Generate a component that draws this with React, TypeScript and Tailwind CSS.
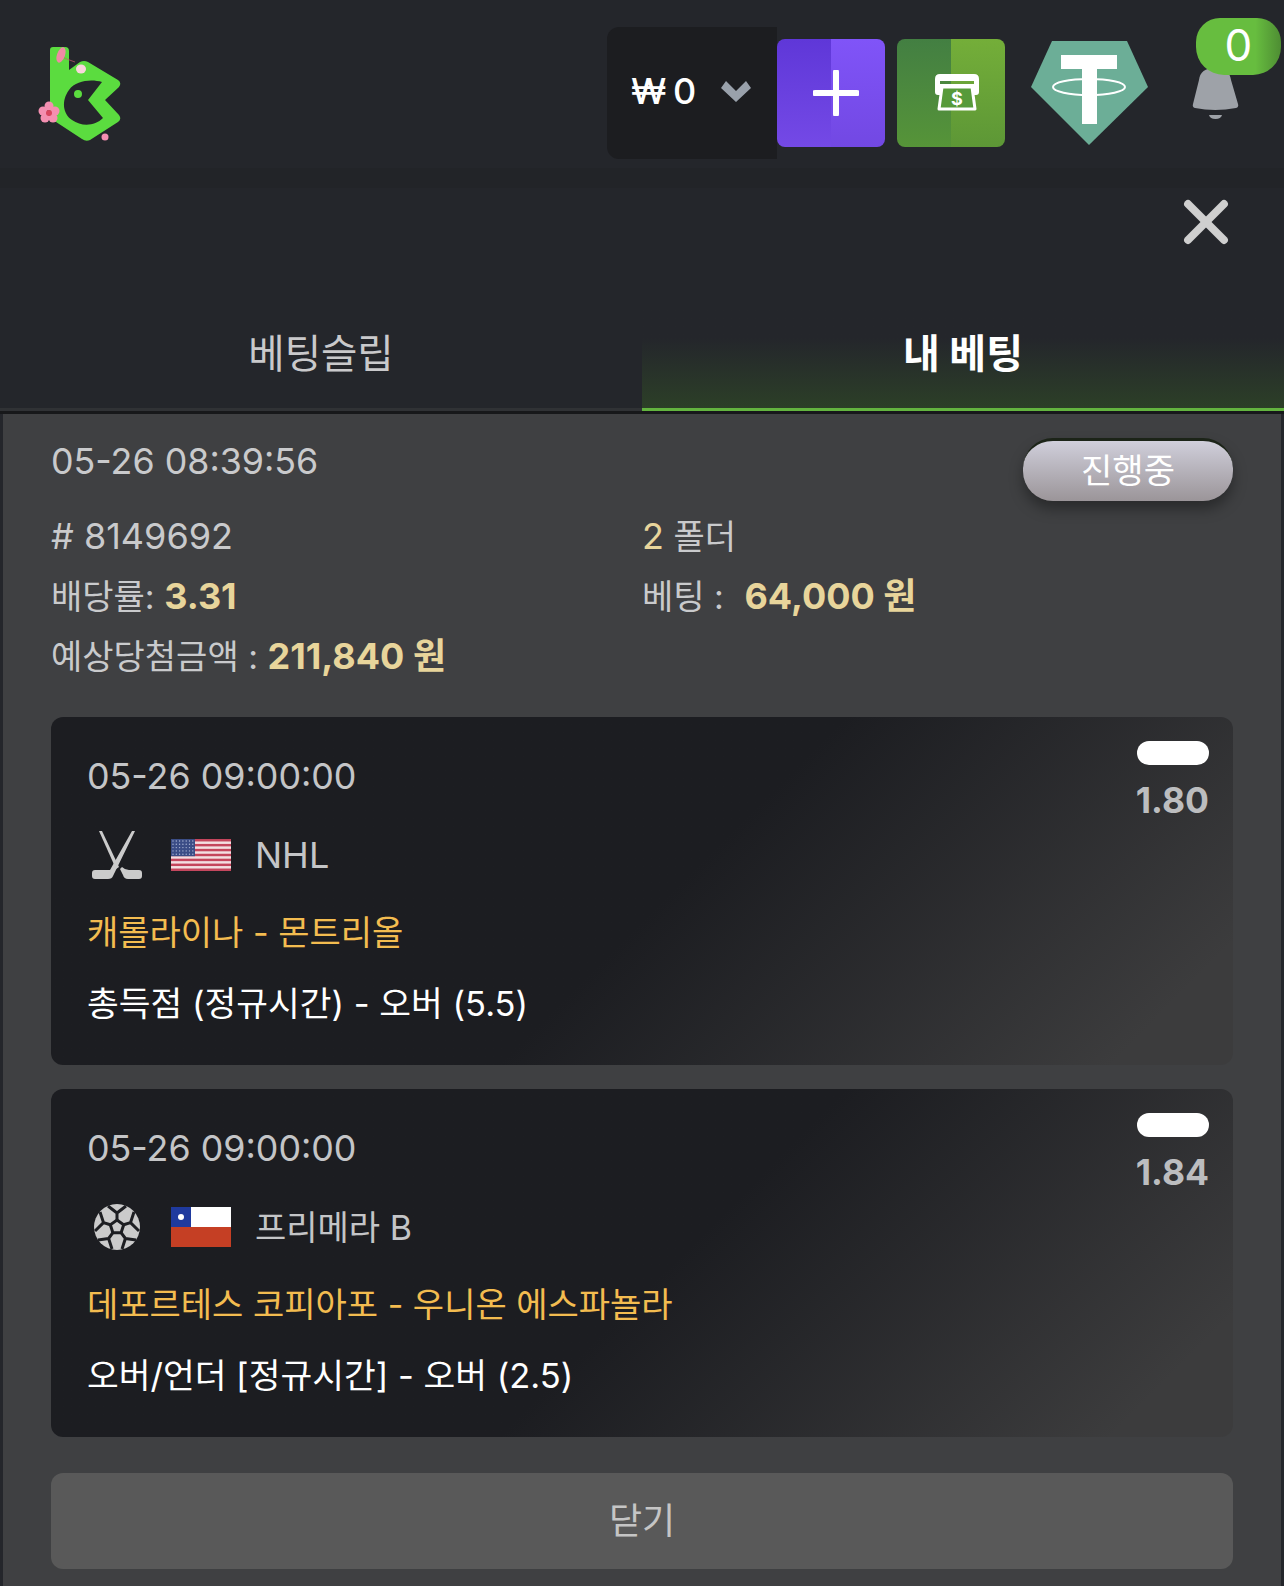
import { X } from "lucide-react";

function Logo() {
  return (
    <svg width="86" height="100" viewBox="38 44 86 100">
      <path
        fillRule="evenodd"
        fill="#5bdc3f"
        d="M53 47 H65 Q69 47 69 51 V70 L80 62 Q84 60 88 62 L118 80 Q122 83 119 87 L105 100 L119 115 Q122 119 118 122 L90 140 Q86 142 82 139 L53 120 Q50 118 50 114 V50 Q50 47 53 47 Z M102 82 C92 79 76 80 69 90 C61 101 63 114 72 120 C82 127 95 126 103 118 L88 100 Z M78 90 A4 4 0 1 1 78 98 A4 4 0 1 1 78 90 Z"
      />
      <g fill="#f48fb1">
        <circle cx="49" cy="106" r="4.5" />
        <circle cx="43" cy="111" r="4.5" />
        <circle cx="55" cy="111" r="4.5" />
        <circle cx="45" cy="118" r="4.5" />
        <circle cx="53" cy="118" r="4.5" />
      </g>
      <circle cx="49" cy="113" r="3" fill="#d9455f" />
      <ellipse cx="61" cy="55" rx="4" ry="8" fill="#ef8aa5" transform="rotate(20 61 55)" />
      <path d="M64 58 L75 62" stroke="#c8566e" strokeWidth="0.7" />
      <ellipse cx="81" cy="69" rx="5" ry="4.5" fill="#f9d5dc" />
      <circle cx="105" cy="137" r="3.5" fill="#f48fb1" />
    </svg>
  );
}

function Tether() {
  return (
    <svg width="117" height="104" viewBox="1031 41 117 104" className="mt-[41px] ml-[26px]">
      <polygon points="1052,41 1127,41 1148,87 1089,145 1031,87" fill="#6cae97" />
      <rect x="1061" y="55" width="56" height="14" fill="#fff" />
      <rect x="1082" y="69" width="15" height="55" fill="#fff" />
      <ellipse cx="1089" cy="87" rx="36" ry="8" fill="none" stroke="#fff" strokeWidth="2" />
    </svg>
  );
}

function Bell() {
  return (
    <svg width="47" height="51" viewBox="0 0 47 51" className="mt-[68px] ml-[44px]">
      <path
        d="M23 0 C33 0 38 4 39 12 L46 36 Q47 39 44 40 Q23 44 3 40 Q0 39 1 36 L7 12 C8 4 13 0 23 0 Z"
        fill="#9ea2a8"
      />
      <path d="M17 47 H30 Q29 51 23.500 51 Q18 51 17 47 Z" fill="#9ea2a8" />
    </svg>
  );
}

function Sticks() {
  return (
    <svg width="50" height="48" viewBox="0 0 50 48" fill="#cbcbcb">
      <path d="M7 0 L10 0 L27 36 L24 38 Z" />
      <path d="M40 0 L43 0 L21 45 Q20 48 16 48 H3 Q0 48 0 45 V42 Q0 39 3 39 H18 Z" />
      <path d="M28 38 L30 36 Q33 39 37 39 H47 Q50 39 50 42 V45 Q50 48 47 48 H36 Q32 48 31 44 Z" />
    </svg>
  );
}

function Ball() {
  const lines = [
    "M23 16 L23 9 M23 9 L14 2 M23 9 L32 2",
    "M29.700 20.800 L36.500 18.600 M36.500 18.600 L40 8 M36.500 18.600 L45 27",
    "M27.100 28.700 L31.400 34.500 M31.400 34.500 L42 36 M31.400 34.500 L28 45",
    "M18.900 28.700 L14.600 34.500 M14.600 34.500 L18 45 M14.600 34.500 L4 36",
    "M16.300 20.800 L9.500 18.600 M9.500 18.600 L1 27 M9.500 18.600 L6 8",
  ];
  return (
    <svg width="46" height="46" viewBox="0 0 46 46">
      <circle cx="23" cy="23" r="23" fill="#cbcbcb" />
      <polygon
        points="23,16 29.700,20.800 27.100,28.700 18.900,28.700 16.300,20.800"
        fill="#cbcbcb"
        stroke="#1d1e22"
        strokeWidth="3"
      />
      {lines.map((d, i) => (
        <path key={i} d={d} stroke="#1d1e22" strokeWidth="3" fill="none" />
      ))}
    </svg>
  );
}

function UsFlag() {
  return (
    <svg width="60" height="32" viewBox="0 0 60 32">
      <rect width="60" height="32" fill="#f3dfe2" />
      {[0, 1, 2, 3, 4, 5, 6].map((i) => (
        <rect key={i} y={i * 4.92} width="60" height="2.460" fill="#c4455c" />
      ))}
      <rect width="24" height="17.200" fill="#3b4d86" />
      {[0, 1, 2, 3, 4].map((r) =>
        [0, 1, 2, 3, 4, 5, 6].map((c) => (
          <circle key={`${r}-${c}`} cx={2 + c * 3.3} cy={2 + r * 3.3} r="0.700" fill="#aab4d4" />
        )),
      )}
    </svg>
  );
}

function ChileFlag() {
  return (
    <svg width="60" height="40" viewBox="0 0 60 40">
      <rect width="60" height="20" fill="#fff" />
      <rect y="20" width="60" height="20" fill="#c53f24" />
      <rect width="20" height="20" fill="#1f3a9e" />
      <circle cx="10" cy="10" r="3" fill="#fff" />
    </svg>
  );
}

function BetCard({
  sport,
  flag,
  league,
  leagueClass,
  teams,
  market,
  odds,
}: {
  sport: React.ReactNode;
  flag: React.ReactNode;
  league: string;
  leagueClass: string;
  teams: string;
  market: string;
  odds: string;
}) {
  return (
    <div className="flex justify-between h-[348px] rounded-xl bg-linear-135 from-[#1c1d21] from-52% to-[#3c3c3d] to-92% pl-[36px] pr-[24px]">
      <div>
        <div className="mt-[37px] h-[44px] leading-[44px] text-[35.800px] text-[#c4c5c7]">05-26 09:00:00</div>
        <div className="mt-[35px] h-[44px] flex items-center text-[#c4c5c7]">
          <div className="w-[84px] flex justify-center pr-[28px] pl-[3px]">{sport}</div>
          {flag}
          <span className={`ml-[24px] ${leagueClass}`}>{league}</span>
        </div>
        <div className="mt-[34px] h-[44px] leading-[44px] text-[34px] text-[#f3bc50]">{teams}</div>
        <div className="mt-[27px] h-[44px] leading-[44px] text-[34.500px] text-white">{market}</div>
      </div>
      <div className="flex flex-col items-end pt-[24px]">
        <div className="w-[72px] h-[24px] rounded-full bg-white" />
        <div className="mt-[14px] font-bold leading-[44px] text-[35.500px] text-[#bcbdbf]">{odds}</div>
      </div>
    </div>
  );
}

export default function App() {
  return (
    <div className="min-h-[1586px] w-[1284px] bg-[#24262b] text-[36px] font-[Inter,'Noto_Sans_CJK_KR',sans-serif]">
      <header className="flex items-start h-[168px] pl-[38px] pt-0">
        <div className="mt-[44px]">
          <Logo />
        </div>
        <div className="relative ml-auto flex items-start pr-[45px]">
          <div className="mt-[27px] flex h-[132px] w-[170px] items-center rounded-l-xl bg-[#1c1d20] pl-[24px] pb-[4px] font-medium tracking-[-1.5px] text-white">
            <span>₩ 0</span>
            <svg width="30" height="21" viewBox="0 0 30 21" className="ml-[26px]" fill="#99a1ab">
              <path d="M0 7 L5 0 L15 10 L25 0 L30 7 L15 21 Z" />
            </svg>
          </div>
          <button className="relative mt-[39px] flex h-[108px] w-[108px] overflow-hidden rounded-lg">
            <span className="h-full w-1/2 bg-linear-to-b from-[#5f37d8] to-[#7449e6]" />
            <span className="h-full w-1/2 bg-linear-to-b from-[#8054f8] to-[#7248e3]" />
            <svg width="46" height="46" viewBox="0 0 46 46" className="absolute left-[36px] top-[31px]">
              <path d="M23 2 V44 M2 23 H44" stroke="#fff" strokeWidth="6" strokeLinecap="round" />
            </svg>
          </button>
          <button className="relative mt-[39px] ml-[12px] flex h-[108px] w-[108px] overflow-hidden rounded-lg">
            <span className="h-full w-1/2 bg-linear-to-b from-[#437f42] to-[#569438]" />
            <span className="h-full w-1/2 bg-linear-to-b from-[#74ae39] to-[#5d9736]" />
            <svg width="44" height="37" viewBox="0 0 44 37" className="absolute left-[38px] top-[35px]">
              <path
                fillRule="evenodd"
                fill="#fff"
                d="M5 0 H39 Q44 0 44 5 V18 Q44 21 41 21 H3 Q0 21 0 18 V5 Q0 0 5 0 Z M5 10 V7 H39 V10 Z"
              />
              <path d="M7 13 H37 L40 35 H4 Z" fill="#579a3a" stroke="#fff" strokeWidth="3" strokeLinejoin="round" />
              <text x="22" y="31" textAnchor="middle" fontSize="18" fontWeight="700" fill="#fff" fontFamily="Inter">
                $
              </text>
            </svg>
          </button>
          <Tether />
          <Bell />
          <div className="absolute right-[3px] top-[18px] flex h-[57px] w-[85px] items-center justify-center rounded-t-[24px] rounded-b-[28px] bg-linear-to-r from-[#67bd3f] from-70% to-[#4e8d33] pb-[3px] text-[44px] text-white">
            0
          </div>
        </div>
      </header>

      <div className="h-[20px] bg-[#222428]" />
      <div className="flex h-[120px] justify-end pr-[42px]">
        <X size={72} strokeWidth={2.6} className="-mt-[2px] text-[#cfcfcf]" />
      </div>

      <div className="flex h-[103px] text-[40px]">
        <div className="flex flex-1 justify-center border-b-[3px] border-[#303235] pt-[21px] text-[39.500px] leading-[50px] text-[#c9c9cb]">
          베팅슬립
        </div>
        <div className="flex flex-1 justify-center border-b-[3px] border-[#63b43f] bg-linear-to-b from-[#24262b] from-30% to-[#2c3f27] pt-[21px] font-bold leading-[50px] text-white">
          내 베팅
        </div>
      </div>

      <div className="border-t-[3px] border-[#17181a]">
        <div className="mx-[3px] min-h-[1172px] bg-[#3f4042] px-[48px] pb-[17px]">
          <div className="flex items-start justify-between">
            <div className="mt-[25px] leading-[44px] text-[35.800px] text-[#c9cacc]">05-26 08:39:56</div>
            <div className="mt-[24px] flex h-[63px] w-[210px] items-center justify-center rounded-[30px] border-t-[3px] border-[#1c2418] bg-linear-to-b from-[#d0cfdb] to-[#9b9599] text-[34px] leading-none text-white shadow-[0_8px_14px_rgba(0,0,0,0.35)]">
              진행중
            </div>
          </div>
          <div className="mt-[5px] grid grid-cols-2 text-[34px] text-[#c9cacc]">
            <div className="h-[60px] text-[36px] leading-[60px]"># 8149692</div>
            <div className="h-[60px] leading-[60px]">
              <span className="text-[36px] text-[#e8d59b]">2</span> 폴더
            </div>
            <div className="h-[60px] leading-[60px]">
              배당률: <span className="text-[36px] font-bold text-[#e8d59b]">3.31</span>
            </div>
            <div className="h-[60px] leading-[60px]">
              베팅 : <span className="ml-[11px] text-[36px] font-bold text-[#e8d59b]">64,000 원</span>
            </div>
            <div className="col-span-2 h-[60px] leading-[60px]">
              예상당첨금액 : <span className="text-[36px] font-bold text-[#e8d59b]">211,840 원</span>
            </div>
          </div>

          <div className="mt-[31px] flex flex-col gap-[24px]">
            <BetCard
              sport={<Sticks />}
              flag={<UsFlag />}
              league="NHL"
              leagueClass="text-[36px]"
              teams="캐롤라이나 - 몬트리올"
              market="총득점 (정규시간) - 오버 (5.5)"
              odds="1.80"
            />
            <BetCard
              sport={<Ball />}
              flag={<ChileFlag />}
              league="프리메라 B"
              leagueClass="text-[34px]"
              teams="데포르테스 코피아포 - 우니온 에스파뇰라"
              market="오버/언더 [정규시간] - 오버 (2.5)"
              odds="1.84"
            />
          </div>

          <button className="mt-[36px] h-[96px] w-full rounded-xl bg-[#595959] text-[#c5c5c5]">닫기</button>
        </div>
      </div>
    </div>
  );
}
